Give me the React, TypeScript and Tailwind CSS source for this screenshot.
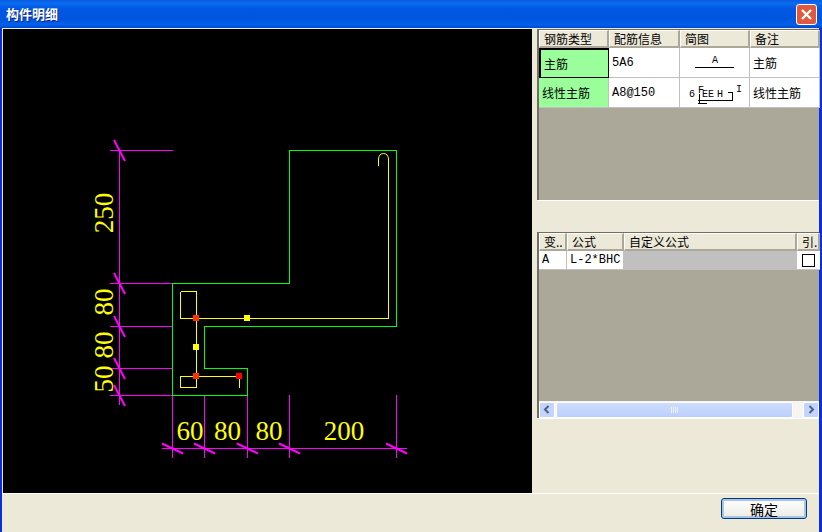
const cjk = "font-['SimSun','Noto_Sans_CJK_SC',sans-serif]";
const mono = "font-['Liberation_Mono','Noto_Sans_CJK_SC',monospace]";

function Tick({ x, y, dx = 5.5, dy = 10.5 }: { x: number; y: number; dx?: number; dy?: number }) {
  return (
    <line x1={x - dx} y1={y - dy} x2={x + dx} y2={y + dy} stroke="#ff00ff" strokeWidth="2" />
  );
}

function Dot({ x, y, c }: { x: number; y: number; c: string }) {
  return <circle cx={x} cy={y} r="3.4" fill={c} />;
}

function Drawing() {
  const m = "#ff00ff";
  const y = "#ffff00";
  const g = "#00ff00";
  return (
    <svg className="block h-full w-full" viewBox="3 29 529 464" shapeRendering="crispEdges">
      {/* left dimension */}
      <g stroke={m} fill="none">
        <path d="M119.5 150V405" />
        <path d="M110 150.5H173M110 283.5H173M110 326.5H173M110 368.5H173M110 395.5H173" />
        <path d="M172.5 395V458M204.5 395V458M247.5 395V458M289.5 395V458M396.5 395V458" />
        <path d="M162 448.5H407" />
      </g>
      <g shapeRendering="auto">
        <Tick x={119.5} y={150.5} />
        <Tick x={119.5} y={283.5} />
        <Tick x={119.5} y={326.5} />
        <Tick x={119.5} y={368.5} />
        <Tick x={119.5} y={395.5} />
        <Tick x={172.5} y={448.5} dx={10.5} dy={5} />
        <Tick x={204.5} y={448.5} dx={10.5} dy={5} />
        <Tick x={247.5} y={448.5} dx={10.5} dy={5} />
        <Tick x={289.5} y={448.5} dx={10.5} dy={5} />
        <Tick x={396.5} y={448.5} dx={10.5} dy={5} />
      </g>

      {/* section outline */}
      <path
        d="M172.5 283.5V395.5H247.5V368.5H204.5V326.5H396.5V150.5H289.5V283.5Z"
        fill="none"
        stroke={g}
      />

      {/* rebar */}
      <g fill="none" stroke={y}>
        <path d="M180.5 291.5H196.5V387.5H180.5V376.5H239.5V387.5" />
        <path d="M180.5 291.5V318.5H388.5V159" />
        <path d="M378.5 166V159Q379 153.5 383.5 153.5Q388 153.5 388.5 159" shapeRendering="auto" />
      </g>
      <Dot x={196} y={318} c="#ff3000" />
      <Dot x={196} y={376} c="#ff3000" />
      <Dot x={239} y={376} c="#ff0000" />
      <Dot x={247} y={318} c={y} />
      <Dot x={196} y={347} c={y} />

      <g fill={y} fontFamily="'Liberation Serif',serif" fontSize="27" textAnchor="middle">
        <text x="190" y="440">60</text>
        <text x="227.5" y="440">80</text>
        <text x="269" y="440">80</text>
        <text x="344" y="440">200</text>
        <text transform="translate(113 213) rotate(-90)">250</text>
        <text transform="translate(113 302) rotate(-90)">80</text>
        <text transform="translate(113 345) rotate(-90)">80</text>
        <text transform="translate(113 379) rotate(-90)">50</text>
      </g>
    </svg>
  );
}

function HeaderCell({ w, label }: { w: string; label: string }) {
  return (
    <div
      className={`${w} flex h-[18px] shrink-0 items-center overflow-hidden whitespace-nowrap border-r-2 border-b-2 border-r-[#aca899] border-b-[#aca899] border-t border-l border-t-white border-l-white bg-[#ece9d8] pl-1 text-[12px] leading-none text-black`}
    >
      {label}
    </div>
  );
}

function Cell({ w, className = "", children }: { w: string; className?: string; children?: React.ReactNode }) {
  return (
    <div
      className={`${w} flex shrink-0 items-center overflow-hidden whitespace-nowrap border-r border-b border-[#c0c0c0] pl-[3px] text-[12px] text-black ${className}`}
    >
      {children}
    </div>
  );
}

function TopGrid() {
  return (
    <div className={`h-[171px] border-t border-l-2 border-t-[#716f64] border-l-[#716f64] bg-[#aba899] ${cjk}`}>
      <div className="flex">
        <HeaderCell w="w-[70px]" label="钢筋类型" />
        <HeaderCell w="w-[71px]" label="配筋信息" />
        <HeaderCell w="w-[70px]" label="简图" />
        <HeaderCell w="w-[70px]" label="备注" />
      </div>
      <div className="flex h-[30px]">
        <Cell w="w-[70px]" className="border-2 border-black bg-[#9aff9a] pl-[1px]">主筋</Cell>
        <Cell w="w-[71px]" className={`bg-white text-[10px] ${mono}`}>5A6</Cell>
        <Cell w="w-[70px]" className="bg-white !pl-0">
          <svg width="69" height="29" viewBox="0 0 69 29">
            <text x="35" y="15" fontSize="10" fontFamily="'Liberation Mono',monospace" textAnchor="middle" fill="#000">A</text>
            <path d="M15 19.5H54" stroke="#000" shapeRendering="crispEdges" />
          </svg>
        </Cell>
        <Cell w="w-[70px]" className="bg-white">主筋</Cell>
      </div>
      <div className="flex h-[30px]">
        <Cell w="w-[70px]" className="bg-[#9aff9a] pl-[3px]">线性主筋</Cell>
        <Cell w="w-[71px]" className={`bg-white text-[10px] ${mono}`}>A8@150</Cell>
        <Cell w="w-[70px]" className="bg-white !pl-0">
          <svg width="69" height="29" viewBox="0 0 69 29">
            <g fontSize="10" fontFamily="'Liberation Mono',monospace" fill="#000">
              <text x="9" y="19">6</text>
              <text x="18" y="15">F</text>
              <text x="22" y="19">E</text>
              <text x="28" y="19">E</text>
              <text x="37" y="19">H</text>
              <text x="56" y="14">I</text>
            </g>
            <path d="M18 22.5H52V14.5H48M18 25.5H27M19 16V26" stroke="#000" fill="none" shapeRendering="crispEdges" />
          </svg>
        </Cell>
        <Cell w="w-[70px]" className="bg-white">线性主筋</Cell>
      </div>
    </div>
  );
}

function BottomGrid() {
  return (
    <div className={`flex h-[186px] flex-col border-t border-l-2 border-t-[#716f64] border-l-[#716f64] bg-[#aba899] ${cjk}`}>
      <div className="flex">
        <HeaderCell w="w-[28px]" label="变.." />
        <HeaderCell w="w-[57px]" label="公式" />
        <HeaderCell w="w-[173px]" label="自定义公式" />
        <HeaderCell w="w-[23px]" label="引." />
      </div>
      <div className="flex h-[19px]">
        <Cell w="w-[28px]" className={`bg-white text-[10px] ${mono}`}>A</Cell>
        <Cell w="w-[57px]" className={`bg-white text-[10px] ${mono}`}>L-2*BHC</Cell>
        <div className="w-[173px] shrink-0 border-b border-[#c0c0c0] bg-[#c0c0c0]" />
        <div className="flex w-[23px] shrink-0 items-center justify-center border-b border-[#c0c0c0] bg-white">
          <div className="h-[13px] w-[13px] border border-black bg-white" />
        </div>
      </div>
      <div className="flex-1" />
      <div className="flex h-[17px] items-center bg-[#f6f5ef]">
        <ScrollButton dir="left" />
        <div className="ml-[1px] flex h-[16px] w-[237px] items-center justify-center rounded-[2px] border border-white bg-[linear-gradient(to_bottom,#cddcff,#bccffc)]">
          <div className="flex gap-[1px]">
            <div className="h-[6px] w-[1px] bg-[#eef3ff]" />
            <div className="h-[6px] w-[1px] bg-[#eef3ff]" />
            <div className="h-[6px] w-[1px] bg-[#eef3ff]" />
            <div className="h-[6px] w-[1px] bg-[#eef3ff]" />
          </div>
        </div>
        <div className="flex-1" />
        <ScrollButton dir="right" />
      </div>
    </div>
  );
}

function ScrollButton({ dir }: { dir: "left" | "right" }) {
  return (
    <div className="flex h-[16px] w-[16px] items-center justify-center rounded-[2px] border border-white bg-[#c3d4fd]">
      <svg width="8" height="9" viewBox="0 0 8 9">
        <path
          d={dir === "left" ? "M5.5 1L2 4.5L5.5 8" : "M2.5 1L6 4.5L2.5 8"}
          fill="none"
          stroke="#4d6185"
          strokeWidth="2"
        />
      </svg>
    </div>
  );
}

export default function App() {
  return (
    <div className="flex h-[532px] w-[822px] flex-col overflow-hidden bg-[#ece9d8]">
      {/* title bar */}
      <div className="flex h-[28px] shrink-0 items-center justify-between bg-[linear-gradient(to_bottom,#0a5ae0_0%,#0a6cf0_12%,#0058e4_30%,#0055de_70%,#0060ec_88%,#0048c8_100%)] pl-[6px] pr-[5px]">
        <span className={`text-[13px] font-bold text-white [text-shadow:1px_1px_0_#0a1f8a] ${cjk}`}>构件明细</span>
        <button className="flex h-[21px] w-[21px] items-center justify-center rounded-[3px] border border-white bg-[#e2583c]">
          <svg width="13" height="13" viewBox="0 0 13 13">
            <path d="M2 2L11 11M11 2L2 11" stroke="#fff" strokeWidth="2.4" />
          </svg>
        </button>
      </div>

      <div className="flex flex-1 border-r-[3px] border-l-[2px] border-r-[#0831d9] border-l-[#0831d9]">
        <div className="flex-1">
          <div className="flex h-[466px] border-b border-white">
            {/* canvas */}
            <div className="mt-[1px] ml-[1px] h-[464px] w-[529px] bg-black">
              <Drawing />
            </div>
            {/* right panel */}
            <div className="ml-[5px] flex w-[282px] flex-col pt-[1px]">
              <TopGrid />
              <div className="h-[1px] bg-white" />
              <div className="h-[31px]" />
              <BottomGrid />
              <div className="h-[1px] bg-white" />
            </div>
          </div>
          {/* footer */}
          <div className="flex h-[37px] justify-end pt-[4px] pr-[12px]">
            <button
              className={`flex h-[21px] w-[86px] items-center justify-center rounded-[3px] border border-[#003c74] bg-[linear-gradient(to_bottom,#ffffff,#ecebe5)] text-[14px] leading-none text-black shadow-[inset_0_0_0_2px_#a9c4ec] ${cjk}`}
            >
              确定
            </button>
          </div>
        </div>
      </div>
    </div>
  );
}
